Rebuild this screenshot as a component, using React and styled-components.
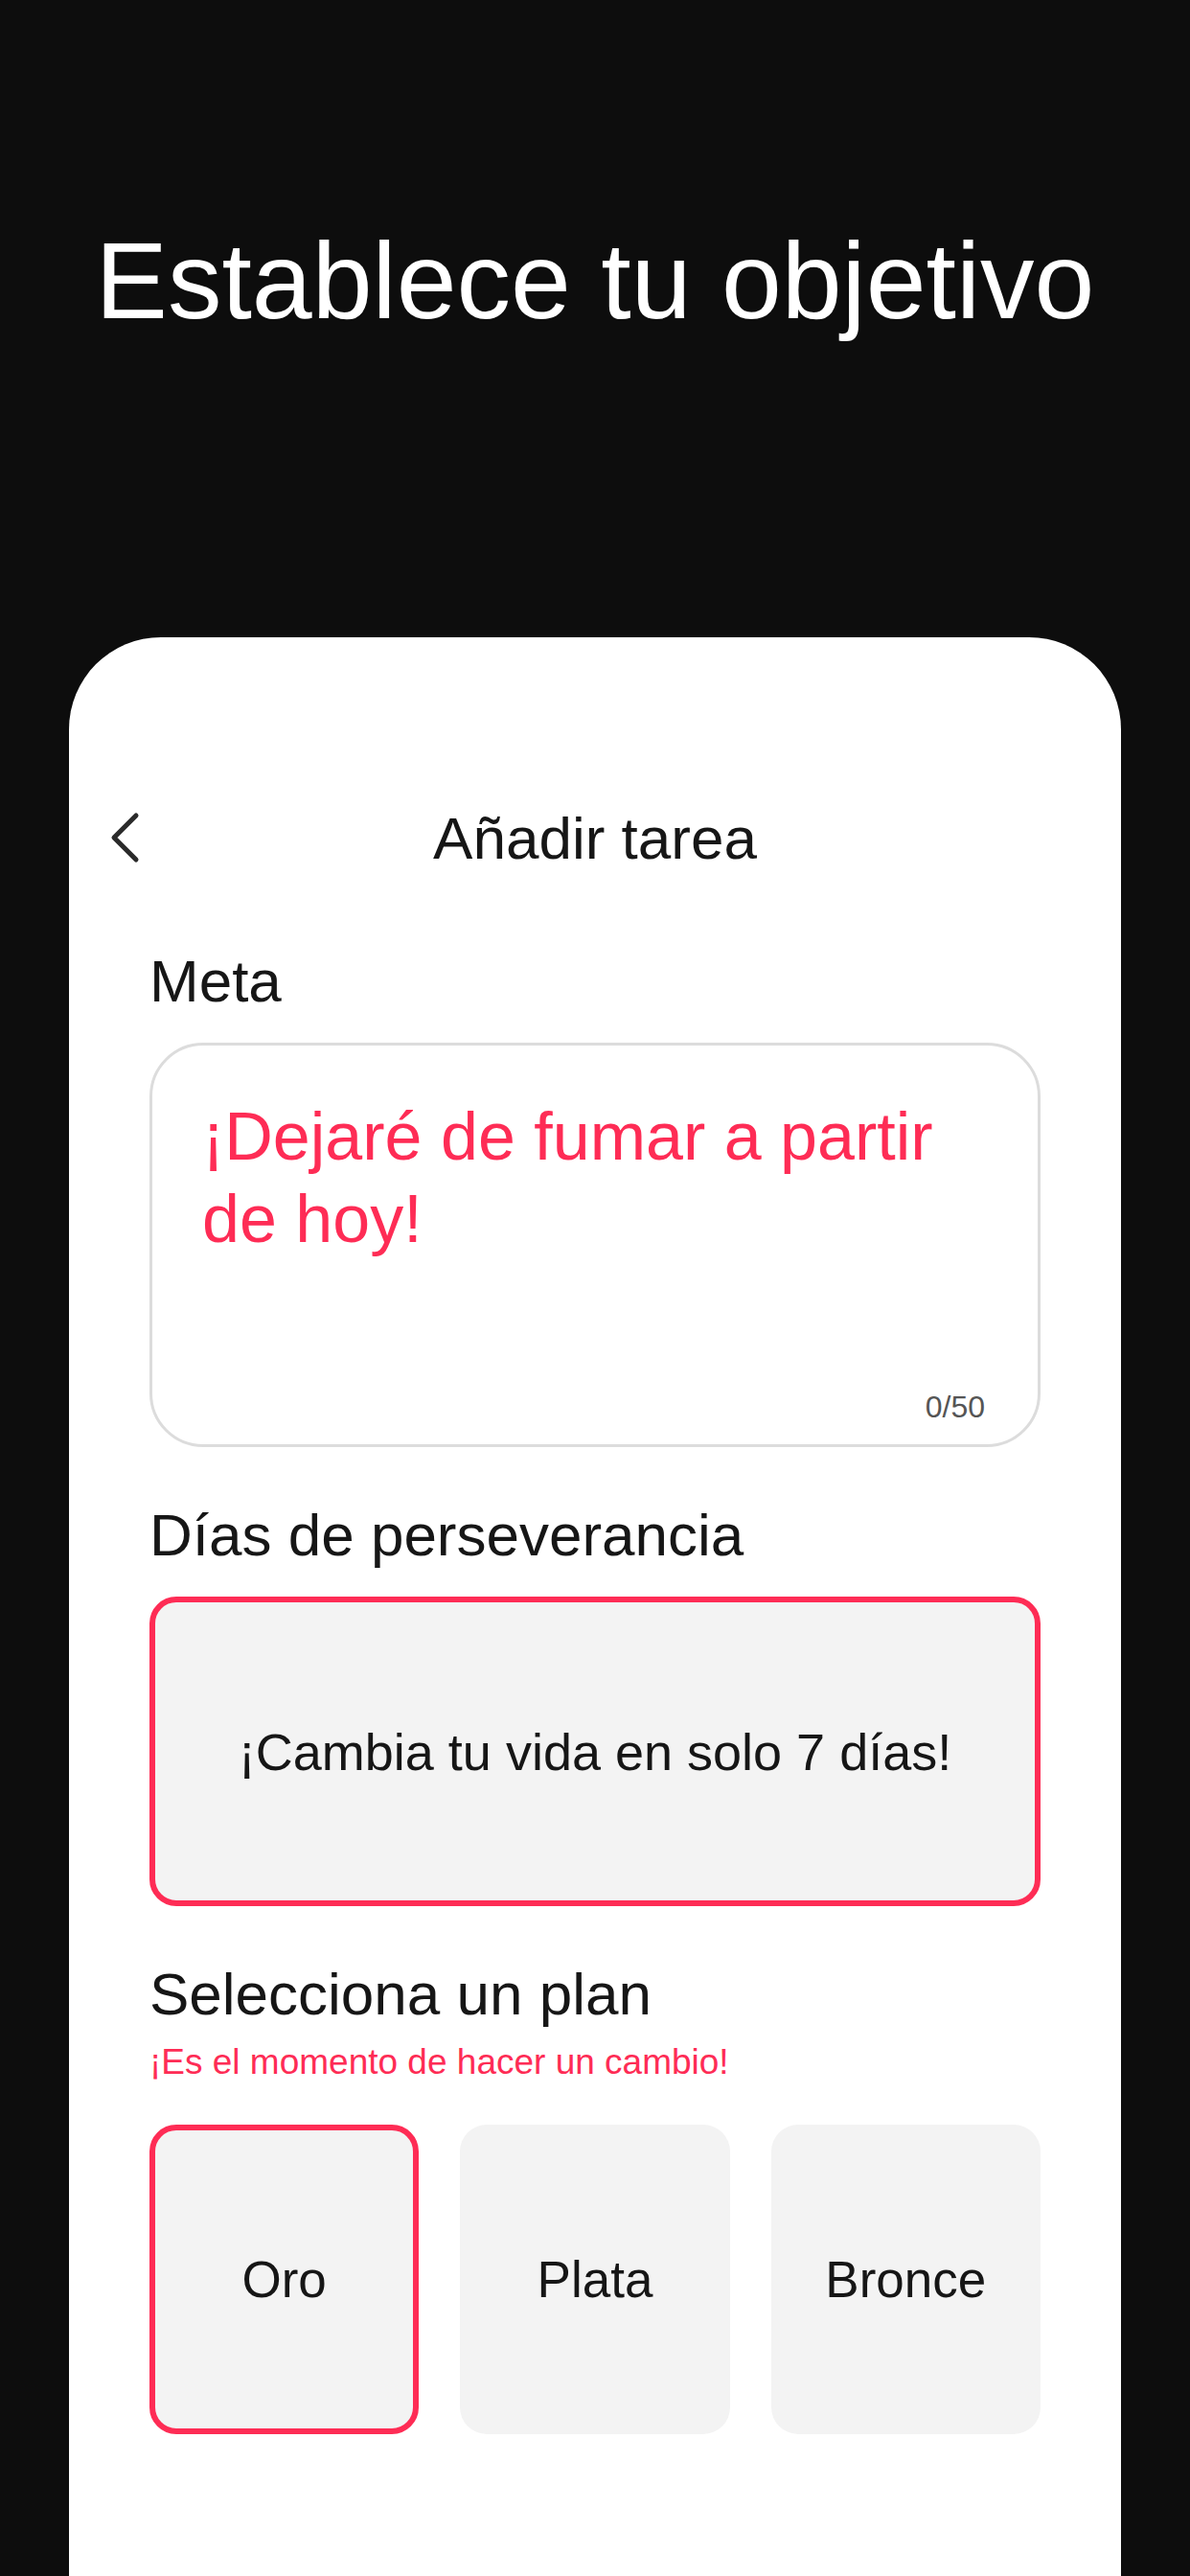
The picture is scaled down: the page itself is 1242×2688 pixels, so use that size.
import React, { useState } from 'react';
import styled, { createGlobalStyle } from 'styled-components';

const GlobalStyle = createGlobalStyle`
  html, body {
    margin: 0;
    padding: 0;
    background: #0d0d0d;
  }
  body {
    font-family: "Liberation Sans", Arial, Helvetica, sans-serif;
  }
  * {
    box-sizing: border-box;
  }
`;

const Page = styled.div`
  min-height: 2688px;
  background: #0d0d0d;
  display: flex;
  flex-direction: column;
`;

const Hero = styled.header`
  height: 665px;
  padding-top: 228px;
`;

const HeroTitle = styled.h1`
  margin: 0;
  color: #ffffff;
  font-size: 113px;
  font-weight: 400;
  line-height: 130px;
  text-align: center;
`;

const Sheet = styled.main`
  flex: 1;
  margin: 0 72px;
  background: #ffffff;
  border-radius: 96px 96px 0 0;
  padding-top: 159px;
`;

const NavBar = styled.div`
  display: grid;
  grid-template-columns: 1fr auto 1fr;
  align-items: center;
  height: 100px;
  padding: 0 42px;
`;

const BackButton = styled.button`
  justify-self: start;
  width: 34px;
  height: 56px;
  padding: 0;
  border: none;
  background: none;
  cursor: pointer;
  display: flex;
  align-items: center;
  justify-content: center;
`;

const NavTitle = styled.h2`
  margin: 0;
  font-size: 62px;
  font-weight: 400;
  color: #161616;
`;

const Form = styled.div`
  padding: 0 84px;
  display: flex;
  flex-direction: column;
`;

const Label = styled.div`
  margin-top: ${p => p.$top}px;
  font-size: 62px;
  line-height: 72px;
  color: #161616;
`;

const Hint = styled.div`
  margin-top: 13px;
  font-size: 37px;
  line-height: 44px;
  color: #fe2c55;
`;

const GoalBox = styled.div`
  margin-top: 28px;
  height: 422px;
  border: 3px solid #dcdcdc;
  border-radius: 56px;
  padding: 52px 55px 20px 52px;
  display: flex;
  flex-direction: column;
`;

const GoalText = styled.div`
  font-size: 70px;
  line-height: 86px;
  color: #fe2c55;
`;

const Counter = styled.div`
  margin-top: auto;
  align-self: flex-end;
  font-size: 32px;
  line-height: 38px;
  color: #555555;
`;

const Choice = styled.div`
  height: 323px;
  border-radius: 28px;
  border: 6px solid ${p => (p.$active ? '#fe2c55' : 'transparent')};
  background: #f3f3f3;
  display: flex;
  align-items: center;
  justify-content: center;
  font-size: ${p => p.$size}px;
  color: #161616;
  cursor: pointer;
`;

const DaysBox = styled(Choice)`
  margin-top: 28px;
`;

const PlanGrid = styled.div`
  margin-top: 43px;
  display: grid;
  grid-template-columns: repeat(3, 1fr);
  gap: 43px;
`;

const ChevronLeft = () => (
  <svg width="34" height="56" viewBox="0 0 34 56" fill="none">
    <path
      d="M28 5 L5 28 L28 51"
      stroke="#2a2a2a"
      strokeWidth="5"
      strokeLinecap="round"
      strokeLinejoin="round"
    />
  </svg>
);

const plans = ['Oro', 'Plata', 'Bronce'];

export default function App() {
  const [plan, setPlan] = useState('Oro');

  return (
    <>
      <GlobalStyle />
      <Page>
        <Hero>
          <HeroTitle>Establece tu objetivo</HeroTitle>
        </Hero>
        <Sheet>
          <NavBar>
            <BackButton aria-label="Volver">
              <ChevronLeft />
            </BackButton>
            <NavTitle>Añadir tarea</NavTitle>
            <span />
          </NavBar>
          <Form>
            <Label $top={64}>Meta</Label>
            <GoalBox>
              <GoalText>¡Dejaré de fumar a partir de hoy!</GoalText>
              <Counter>0/50</Counter>
            </GoalBox>

            <Label $top={56}>Días de perseverancia</Label>
            <DaysBox $active $size={54}>¡Cambia tu vida en solo 7 días!</DaysBox>

            <Label $top={56}>Selecciona un plan</Label>
            <Hint>¡Es el momento de hacer un cambio!</Hint>
            <PlanGrid>
              {plans.map(name => (
                <Choice
                  key={name}
                  $size={53}
                  $active={plan === name}
                  onClick={() => setPlan(name)}
                >
                  {name}
                </Choice>
              ))}
            </PlanGrid>
          </Form>
        </Sheet>
      </Page>
    </>
  );
}
